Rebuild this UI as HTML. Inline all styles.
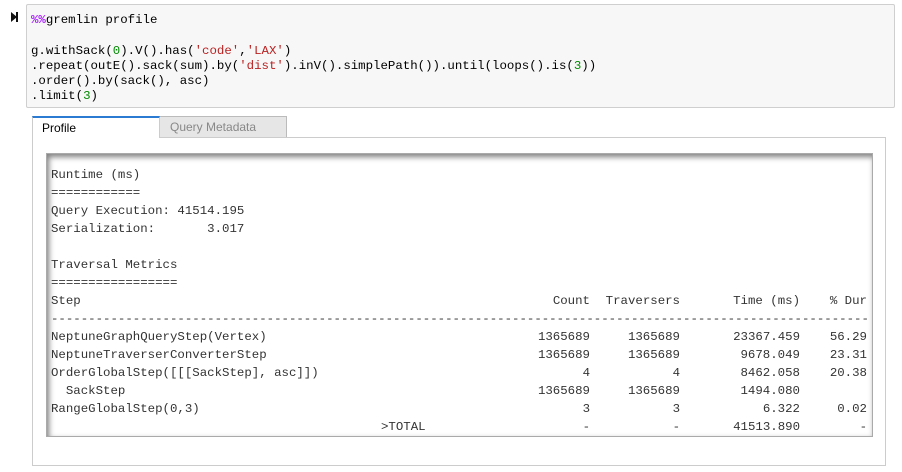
<!DOCTYPE html>
<html><head><meta charset="utf-8"><style>
body{margin:0;width:902px;height:472px;background:#fff;position:relative;overflow:hidden;font-family:"Liberation Sans",sans-serif}
.code{position:absolute;left:26px;top:4px;width:867px;height:102px;background:#f7f7f7;border:1px solid #cfcfcf;border-radius:2px}
.code pre{margin:0;position:absolute;left:4px;top:8px;font:12.4px/15.3px "Liberation Mono",monospace;color:#000}
.s{color:#ba2121}.n{color:#080}.m{color:#aa22ff;font-weight:bold}
.run{position:absolute;left:11px;top:12px;width:0;height:0;border-left:6px solid #111;border-top:5px solid transparent;border-bottom:5px solid transparent}
.run:after{content:"";position:absolute;left:-1px;top:-5px;width:2px;height:10px;background:#111}
.tab{position:absolute;top:116px;height:22px;box-sizing:border-box;font-size:12px;line-height:21px}
.t1{left:32px;width:128px;background:#fff;border:1px solid #ccc;border-top:2px solid #2c7bd3;border-bottom:none;padding-left:9px;color:#000;z-index:2}
.t2{left:159px;width:128px;background:#e6e6e6;border:1px solid #bbb;color:#888;padding-left:10px}
.out{position:absolute;left:32px;top:137px;width:854px;height:329px;border:1px solid #ccc;box-sizing:border-box}
.pre{position:absolute;left:46px;top:153px;width:827px;height:284px;box-sizing:border-box;border:1px solid #aaa;box-shadow:inset 2px 3px 6px rgba(0,0,0,.5)}
.l{position:absolute;font:12.4px "Liberation Mono",monospace;color:#333;white-space:pre;line-height:14px}
.c1,.c2,.c3,.c4{position:absolute;font:12.4px "Liberation Mono",monospace;color:#333;white-space:pre;line-height:14px;text-align:right}
.c1{right:312px}.c2{right:222px}.c3{right:102px}.c4{right:35px}
</style></head><body>
<div class="run"></div>
<div class="code"><pre><span class="m">%%</span>gremlin profile

g.withSack(<span class="n">0</span>).V().has(<span class="s">'code'</span>,<span class="s">'LAX'</span>)
.repeat(outE().sack(sum).by(<span class="s">'dist'</span>).inV().simplePath()).until(loops().is(<span class="n">3</span>))
.order().by(sack(), asc)
.limit(<span class="n">3</span>)</pre></div>
<div class="tab t2">Query Metadata</div>
<div class="tab t1">Profile</div>
<div class="out"></div>
<div class="pre"></div>
<div class="l" style="left:51px;top:168px">Runtime (ms)</div>
<div class="l" style="left:51px;top:186px">============</div>
<div class="l" style="left:51px;top:204px">Query Execution: 41514.195</div>
<div class="l" style="left:51px;top:222px">Serialization:       3.017</div>
<div class="l" style="left:51px;top:258px">Traversal Metrics</div>
<div class="l" style="left:51px;top:276px">=================</div>
<div class="l" style="left:51px;top:294px">Step</div>
<div class="l" style="left:51px;top:312px;width:816px;overflow:hidden">--------------------------------------------------------------------------------------------------------------</div>
<div class="l" style="left:51px;top:330px">NeptuneGraphQueryStep(Vertex)</div>
<div class="l" style="left:51px;top:348px">NeptuneTraverserConverterStep</div>
<div class="l" style="left:51px;top:366px">OrderGlobalStep([[[SackStep], asc]])</div>
<div class="l" style="left:51px;top:384px">  SackStep</div>
<div class="l" style="left:51px;top:402px">RangeGlobalStep(0,3)</div>
<div class="l" style="left:381px;top:420px">&gt;TOTAL</div>

<div class="c1" style="top:294px">Count</div><div class="c2" style="top:294px">Traversers</div><div class="c3" style="top:294px">Time (ms)</div><div class="c4" style="top:294px">% Dur</div>
<div class="c1" style="top:330px">1365689</div><div class="c2" style="top:330px">1365689</div><div class="c3" style="top:330px">23367.459</div><div class="c4" style="top:330px">56.29</div>
<div class="c1" style="top:348px">1365689</div><div class="c2" style="top:348px">1365689</div><div class="c3" style="top:348px">9678.049</div><div class="c4" style="top:348px">23.31</div>
<div class="c1" style="top:366px">4</div><div class="c2" style="top:366px">4</div><div class="c3" style="top:366px">8462.058</div><div class="c4" style="top:366px">20.38</div>
<div class="c1" style="top:384px">1365689</div><div class="c2" style="top:384px">1365689</div><div class="c3" style="top:384px">1494.080</div>
<div class="c1" style="top:402px">3</div><div class="c2" style="top:402px">3</div><div class="c3" style="top:402px">6.322</div><div class="c4" style="top:402px">0.02</div>
<div class="c1" style="top:420px">-</div><div class="c2" style="top:420px">-</div><div class="c3" style="top:420px">41513.890</div><div class="c4" style="top:420px">-</div>
</body></html>
